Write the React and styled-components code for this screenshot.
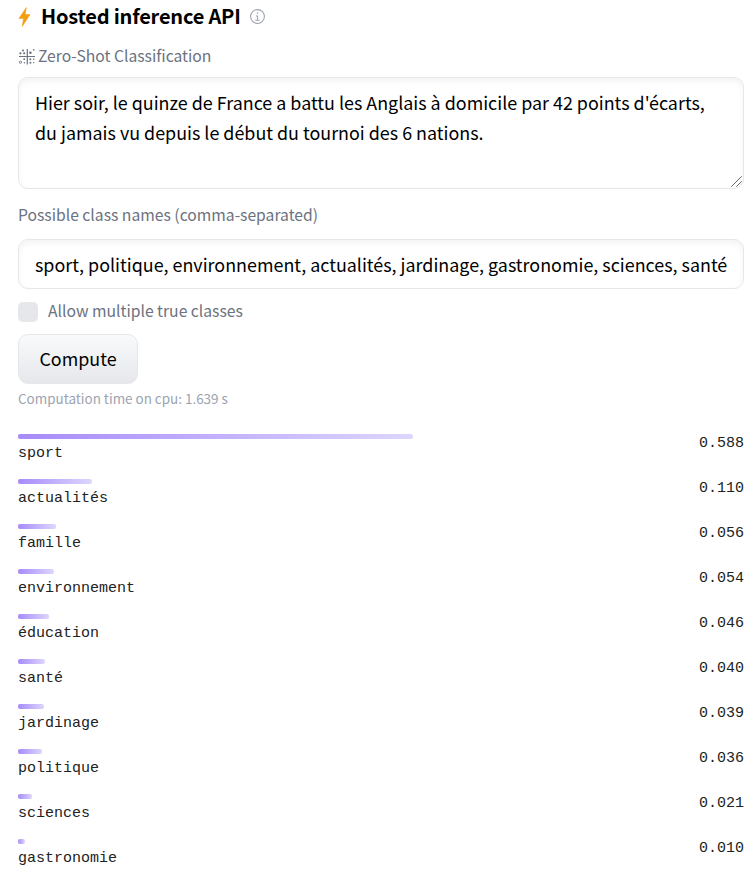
import React from "react"
import styled, { createGlobalStyle } from "styled-components"

const results = [
  { label: "sport", score: "0.588", width: 395 },
  { label: "actualités", score: "0.110", width: 74 },
  { label: "famille", score: "0.056", width: 38 },
  { label: "environnement", score: "0.054", width: 36 },
  { label: "éducation", score: "0.046", width: 31 },
  { label: "santé", score: "0.040", width: 27 },
  { label: "jardinage", score: "0.039", width: 26 },
  { label: "politique", score: "0.036", width: 24 },
  { label: "sciences", score: "0.021", width: 14 },
  { label: "gastronomie", score: "0.010", width: 7 },
]

const BoltIcon = () => (
  <svg width="13" height="20" viewBox="0 0 13 20">
    <path
      d="M8.3 0.6L1 11.4h4.6L4.2 19.4L12 7.6H7.1z"
      fill="#f59e0b"
      stroke="#f59e0b"
      strokeWidth="0.6"
      strokeLinejoin="round"
    />
  </svg>
)

const InfoIcon = () => (
  <svg className="info" width="17" height="17" viewBox="0 0 32 32" fill="#9ca3af">
    <path d="M17 22v-8h-4v2h2v6h-3v2h8v-2z" />
    <path d="M16 8a1.5 1.5 0 1 0 1.5 1.5A1.5 1.5 0 0 0 16 8z" />
    <path d="M16 30a14 14 0 1 1 14-14a14 14 0 0 1-14 14zm0-26a12 12 0 1 0 12 12A12 12 0 0 0 16 4z" />
  </svg>
)

const ZeroShotIcon = () => (
  <svg width="17" height="17" viewBox="0 0 17 17" fill="#6b7280">
    <path d="M1 8h16v1.1H1zM8.7 1h1.2v15.4H8.7z" />
    <circle cx="5" cy="2.4" r="1" />
    <circle cx="2.4" cy="5.3" r="1.1" />
    <circle cx="6.2" cy="5.3" r="1.1" />
    <circle cx="12.4" cy="4.7" r="1.3" />
    <circle cx="15.7" cy="1.9" r="0.8" />
    <circle cx="6.2" cy="11.2" r="0.9" />
    <circle cx="2.5" cy="14.2" r="1.1" fill="none" stroke="#6b7280" strokeWidth="0.9" />
    <circle cx="6.4" cy="14.8" r="0.7" />
    <circle cx="12.3" cy="11.3" r="1" />
    <circle cx="15.8" cy="11.3" r="0.8" />
    <circle cx="12.4" cy="14.8" r="1" />
    <circle cx="15.6" cy="14.6" r="0.7" />
  </svg>
)

const ResizeGrip = () => (
  <svg width="11" height="11" viewBox="0 0 11 11" stroke="#555" strokeWidth="0.9">
    <path d="M0.3 10.7L10.7 0.3M5.3 10.7L10.7 5.3" />
  </svg>
)

const App = () => {
  return (
    <>
      <GlobalStyle />
      <Wrapper>
        <Title>
          <BoltIcon />
          <span>Hosted inference API</span>
          <InfoIcon />
        </Title>
        <Task>
          <ZeroShotIcon />
          <span>Zero-Shot Classification</span>
        </Task>
        <TextField>
          <TextArea
            spellCheck={false}
            defaultValue="Hier soir, le quinze de France a battu les Anglais à domicile par 42 points d'écarts, du jamais vu depuis le début du tournoi des 6 nations."
          />
          <ResizeGrip />
        </TextField>
        <FieldLabel>Possible class names (comma-separated)</FieldLabel>
        <Input
          spellCheck={false}
          defaultValue="sport, politique, environnement, actualités, jardinage, gastronomie, sciences, santé"
        />
        <CheckRow>
          <input type="checkbox" />
          <span>Allow multiple true classes</span>
        </CheckRow>
        <Button>Compute</Button>
        <Time>Computation time on cpu: 1.639 s</Time>
        <Results>
          {results.map(({ label, score, width }) => (
            <Result key={label}>
              <div>
                <Bar style={{ width }} />
                <span className="label">{label}</span>
              </div>
              <span className="score">{score}</span>
            </Result>
          ))}
        </Results>
      </Wrapper>
    </>
  )
}

const GlobalStyle = createGlobalStyle`
  * {
    box-sizing: border-box;
  }
  body {
    margin: 0;
    background: white;
    overflow: hidden;
  }
  body, input, textarea, button {
    font-family: "Noto Sans CJK SC", "Noto Sans", sans-serif;
  }
`

const Wrapper = styled.main`
  display: flex;
  flex-direction: column;
  align-items: flex-start;
  height: 876px;
  padding: 2px 11px 0 18px;
  color: black;
`

const Title = styled.div`
  display: flex;
  align-items: center;
  height: 29px;
  font-size: 20px;
  font-weight: 700;
  letter-spacing: -0.2px;
  line-height: 29px;
  white-space: nowrap;
  span {
    margin-left: 10px;
    padding-bottom: 2px;
  }
  .info {
    margin-left: 8px;
  }
`

const Task = styled.div`
  display: flex;
  align-items: center;
  height: 26px;
  margin-top: 12px;
  color: #6b7280;
  font-size: 15.7px;
  line-height: 26px;
  white-space: nowrap;
  span {
    margin-left: 3px;
  }
`

const field = `
  width: 100%;
  border: 1px solid #e5e7eb;
  border-radius: 10px;
  background: white;
  box-shadow: inset 0 3px 6px rgba(0, 0, 0, 0.05);
  color: black;
  font-size: 17.9px;
  line-height: 30px;
  outline: none;
`

const TextField = styled.div`
  position: relative;
  width: 100%;
  margin-top: 8px;
  svg {
    position: absolute;
    right: 2px;
    bottom: 2px;
  }
`

const TextArea = styled.textarea`
  ${field}
  display: block;
  height: 112px;
  padding: 9px 15px 11px 16px;
  resize: none;
  overflow: hidden;
`

const FieldLabel = styled.div`
  height: 26px;
  margin-top: 13px;
  color: #6b7280;
  font-size: 15.7px;
  line-height: 26px;
`

const Input = styled.input`
  ${field}
  height: 50px;
  margin-top: 11px;
  padding: 0 14px 0 16px;
`

const CheckRow = styled.label`
  display: flex;
  align-items: center;
  height: 26px;
  margin-top: 10px;
  color: #6b7280;
  font-size: 15.7px;
  line-height: 26px;
  span {
    padding-bottom: 2px;
  }
  input {
    appearance: none;
    width: 20px;
    height: 20px;
    margin: 0 10px 0 0;
    border-radius: 5px;
    background: #e5e7eb;
  }
`

const Button = styled.button`
  width: 120px;
  height: 50px;
  margin-top: 9px;
  padding: 0 0 2px;
  border: 1px solid #e5e7eb;
  border-radius: 10px;
  background: linear-gradient(to bottom, #f9fafb, #e5e7eb);
  color: black;
  font-size: 17.9px;
  line-height: 30px;
`

const Time = styled.div`
  height: 20px;
  margin-top: 4px;
  color: #9ca3af;
  font-size: 13.45px;
  line-height: 20px;
`

const Results = styled.div`
  display: flex;
  flex-direction: column;
  gap: 15px;
  width: 100%;
  margin-top: 26px;
  font-family: "Liberation Mono", monospace;
  font-size: 15px;
  color: #222;
`

const Result = styled.div`
  display: flex;
  justify-content: space-between;
  align-items: flex-start;
  height: 30px;
  .label {
    display: block;
    margin-top: 5px;
    line-height: 20px;
  }
  .score {
    line-height: 19px;
  }
`

const Bar = styled.div`
  height: 5px;
  border-radius: 2px;
  background: linear-gradient(to right, #a78bfa, #ddd6fe);
`

export default App
